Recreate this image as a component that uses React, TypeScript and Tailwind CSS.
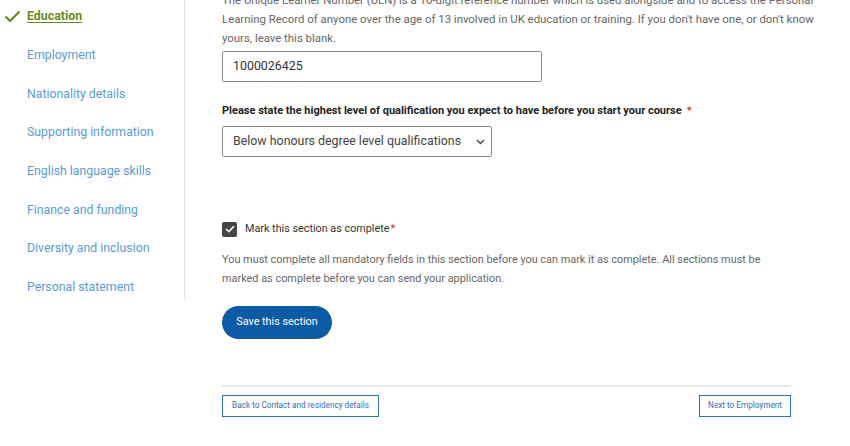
import React from "react";

const items = [
  "Employment",
  "Nationality details",
  "Supporting information",
  "English language skills",
  "Finance and funding",
  "Diversity and inclusion",
  "Personal statement",
];

export default function App() {
  return (
    <div
      className="w-[850px] h-[446px] overflow-hidden bg-white flex"
      style={{ fontFamily: "Roboto, 'Liberation Sans', sans-serif" }}
    >
      <div className="w-[185px] h-[300px] border-r border-[#e3e3e3] shrink-0">
        <div className="mt-[-3px]">
          <div className="h-[38.7px] flex items-center">
            <svg width="17" height="13" viewBox="0 0 17 13" className="ml-[4px] mr-[6px]">
              <path d="M1.5 6.5 L6 11 L15.5 1.5" fill="none" stroke="#6b8a1e" strokeWidth="2.2" />
            </svg>
            <span className="text-[12.4px] font-bold text-[#6b8a1e] underline underline-offset-2">Education</span>
          </div>
          {items.map((t) => (
            <div key={t} className="h-[38.7px] flex items-center pl-[27px] text-[12.3px] text-[#5b9ad6]">
              {t}
            </div>
          ))}
        </div>
      </div>
      <div className="pl-[37px] w-[620px] flex flex-col shrink-0">
        <p className="mt-[-9.5px] text-[11.4px] leading-[19px] text-[#666] whitespace-nowrap">
          The Unique Learner Number (ULN) is a 10-digit reference number which is used alongside and to access the Personal
          <br />
          Learning Record of anyone over the age of 13 involved in UK education or training. If you don't have one, or don't know
          <br />
          yours, leave this blank.
        </p>
        <div className="mt-[3.5px] w-[320px] h-[31px] border border-[#8a8a8a] rounded-[2px] flex items-center pl-[10px] text-[12.4px] text-[#333]">
          1000026425
        </div>
        <div className="mt-[21px] text-[11px] leading-[16px] font-bold text-[#222]">
          Please state the highest level of qualification you expect to have before you start your course
          <span className="text-[#d4351c] ml-[5px]">*</span>
        </div>
        <div className="mt-[7px] w-[270px] h-[31px] border border-[#8a8a8a] rounded-[2px] flex items-center justify-between pl-[10px] pr-[6px] text-[12.4px] text-[#444]">
          <span>Below honours degree level qualifications</span>
          <svg width="9" height="6" viewBox="0 0 9 6">
            <path d="M1 1 L4.5 4.5 L8 1" fill="none" stroke="#444" strokeWidth="1.4" />
          </svg>
        </div>
        <div className="mt-[64px] flex items-center h-[16px]">
          <div className="w-[15px] h-[15px] bg-[#454545] rounded-[2px] flex items-center justify-center">
            <svg width="10" height="8" viewBox="0 0 10 8">
              <path d="M1 4 L3.8 6.6 L9 1.2" fill="none" stroke="#fff" strokeWidth="1.6" />
            </svg>
          </div>
          <span className="ml-[8px] text-[10.8px] text-[#333]">Mark this section as complete</span>
          <span className="text-[11px] text-[#d4351c] ml-[1px]">*</span>
        </div>
        <p className="mt-[13px] text-[10.9px] leading-[19px] text-[#666] whitespace-nowrap">
          You must complete all mandatory fields in this section before you can mark it as complete. All sections must be
          <br />
          marked as complete before you can send your application.
        </p>
        <div className="mt-[17.5px]">
          <button className="w-[110px] h-[33px] rounded-full bg-[#0d5ba6] text-white text-[10.8px]">Save this section</button>
        </div>
        <div className="mt-[46px] w-[569px] h-[2px] bg-[#e8e8e8]" />
        <div className="mt-[8px] w-[569px] flex justify-between">
          <button className="h-[22px] w-[157px] border-[1.5px] border-[#2e73b8] text-[8.2px] text-[#3a6db0]">
            Back to Contact and residency details
          </button>
          <button className="h-[22px] w-[92px] border-[1.5px] border-[#2e73b8] text-[8.2px] text-[#3a6db0]">
            Next to Employment
          </button>
        </div>
      </div>
    </div>
  );
}
